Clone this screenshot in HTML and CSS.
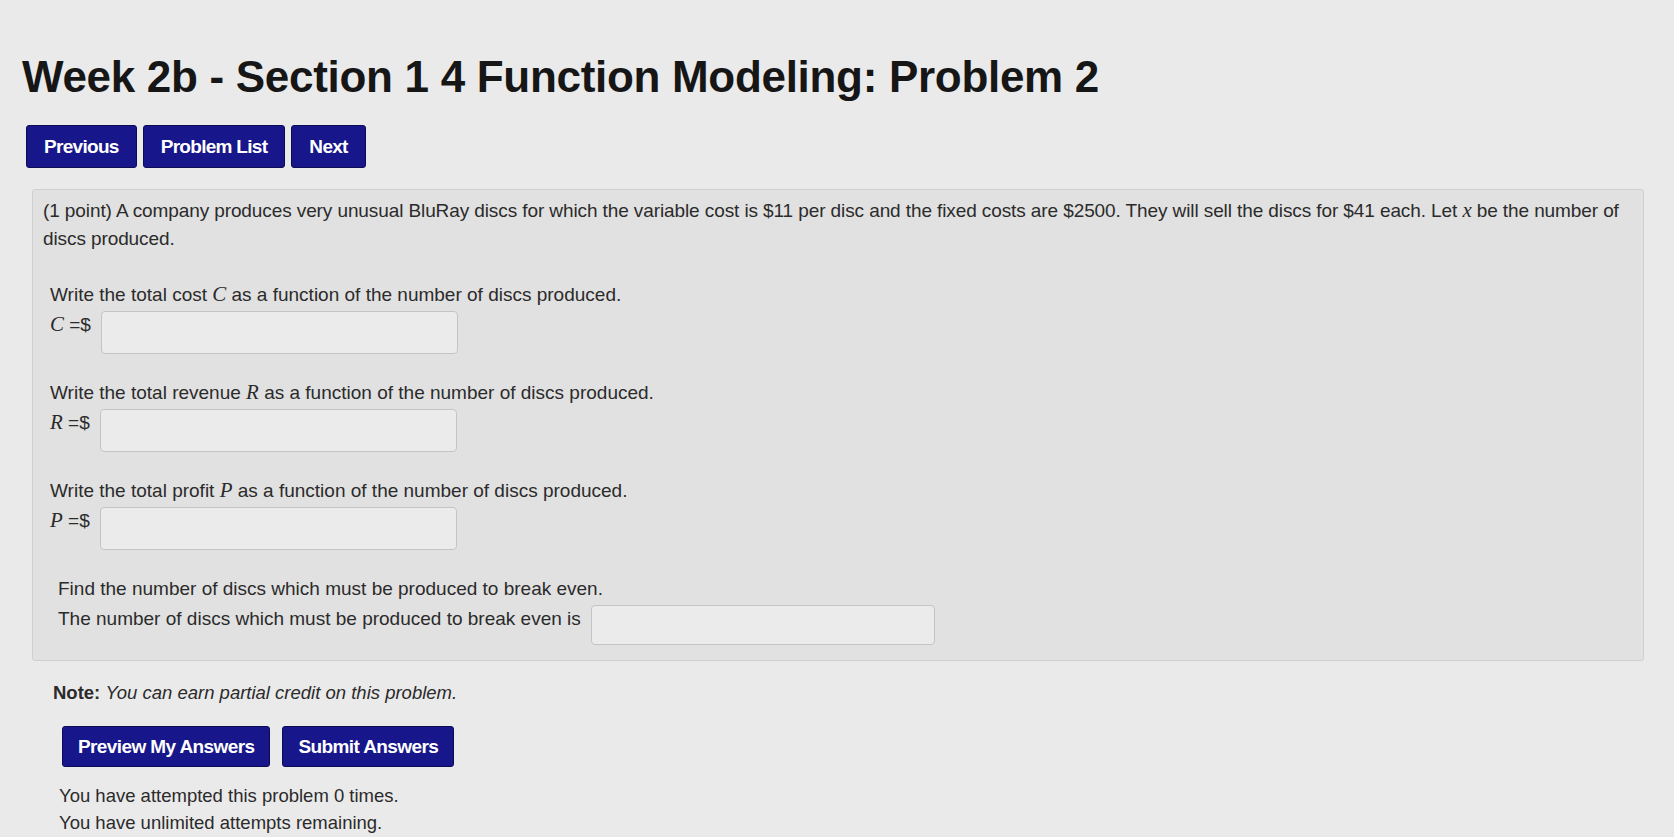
FILE: index.html
```html
<!DOCTYPE html>
<html lang="en">
<head>
    <meta charset="UTF-8">
    <meta name="viewport" content="width=device-width, initial-scale=1.0">
    <title>Week 2b - Section 1 4 Function Modeling: Problem 2</title>
    <link rel="stylesheet" href="styles.css">
</head>
<body>
    <div class="page">
        <h1 class="title">Week 2b - Section 1 4 Function Modeling: Problem 2</h1>

        <!-- Navigation -->
        <div class="nav">
            <a class="btn" href="#">Previous</a>
            <a class="btn" href="#">Problem List</a>
            <a class="btn" href="#">Next</a>
        </div>

        <!-- Problem body -->
        <div class="problem">
            <p class="intro">(1 point) A company produces very unusual BluRay discs for which the variable cost is $11 per disc and the fixed costs are $2500. They will sell the discs for $41 each. Let <i class="math">x</i> be the number of<br>discs produced.</p>

            <div class="part">
                <p>Write the total cost <i class="math">C</i> as a function of the number of discs produced.</p>
                <div class="answer-row">
                    <span><i class="math">C</i> =$</span>
                    <input type="text" class="answer">
                </div>
            </div>

            <div class="part">
                <p>Write the total revenue <i class="math">R</i> as a function of the number of discs produced.</p>
                <div class="answer-row">
                    <span><i class="math">R</i> =$</span>
                    <input type="text" class="answer">
                </div>
            </div>

            <div class="part">
                <p>Write the total profit <i class="math">P</i> as a function of the number of discs produced.</p>
                <div class="answer-row">
                    <span><i class="math">P</i> =$</span>
                    <input type="text" class="answer">
                </div>
            </div>

            <div class="part last">
                <p>Find the number of discs which must be produced to break even.</p>
                <div class="answer-row">
                    <span>The number of discs which must be produced to break even is</span>
                    <input type="text" class="answer wide">
                </div>
            </div>
        </div>

        <p class="note"><b>Note:</b> <i>You can earn partial credit on this problem.</i></p>

        <div class="submit-row">
            <button type="button" class="btn">Preview My Answers</button>
            <button type="button" class="btn">Submit Answers</button>
        </div>

        <p class="attempts">You have attempted this problem 0 times.<br>You have unlimited attempts remaining.</p>
    </div>
</body>
</html>
```

FILE: styles.css
```css
body {
    margin: 0;
    background: #eaeaea;
    font-family: "Liberation Sans", Arial, sans-serif;
    color: #2b2b2b;
}
.page {
    padding: 52px 30px 0 22px;
}
.title {
    margin: 0;
    font-size: 44px;
    font-weight: bold;
    color: #161616;
    letter-spacing: -0.3px;
}
.nav {
    display: flex;
    gap: 6px;
    margin-top: 23px;
    margin-left: 4px;
}
.btn {
    display: inline-block;
    background: #17168a;
    color: #fff;
    font-family: "Liberation Sans", Arial, sans-serif;
    font-weight: bold;
    font-size: 19px;
    letter-spacing: -0.7px;
    text-decoration: none;
    border: 1px solid #0c0c55;
    border-radius: 3px;
    padding: 10px 17px;
    line-height: 21px;
    cursor: pointer;
}
.problem {
    margin-top: 21px;
    margin-left: 10px;
    background: #e1e1e1;
    border: 1px solid #d0d0d0;
    border-radius: 3px;
    padding: 7px 4px 15px 10px;
    font-size: 19px;
    line-height: 28px;
}
.problem p {
    margin: 0;
}
.intro {
    margin-bottom: 28px !important;
    letter-spacing: -0.1px;
}
.part {
    margin-bottom: 25px;
    padding-left: 7px;
}
.part.last {
    margin-bottom: 0;
    padding-left: 15px;
}
.answer-row {
    display: flex;
    align-items: flex-start;
    gap: 10px;
    margin-top: 2px;
}
.math {
    font-family: "Liberation Serif", "Times New Roman", serif;
    font-style: italic;
    font-size: 1.1em;
    line-height: 1;
}
.answer {
    width: 357px;
    height: 43px;
    box-sizing: border-box;
    background: #ebebeb;
    border: 1px solid #c4c4c4;
    border-radius: 4px;
}
.answer.wide {
    width: 344px;
    height: 40px;
}
.note {
    margin: 20px 0 0 31px;
    font-size: 18.5px;
    line-height: 23px;
}
.submit-row {
    display: flex;
    gap: 12px;
    margin: 22px 0 0 40px;
}
.submit-row .btn {
    font-size: 19px;
    letter-spacing: -0.6px;
    padding: 9px 15px;
}
.attempts {
    margin: 15px 0 0 37px;
    font-size: 18.5px;
    line-height: 27px;
}
```
